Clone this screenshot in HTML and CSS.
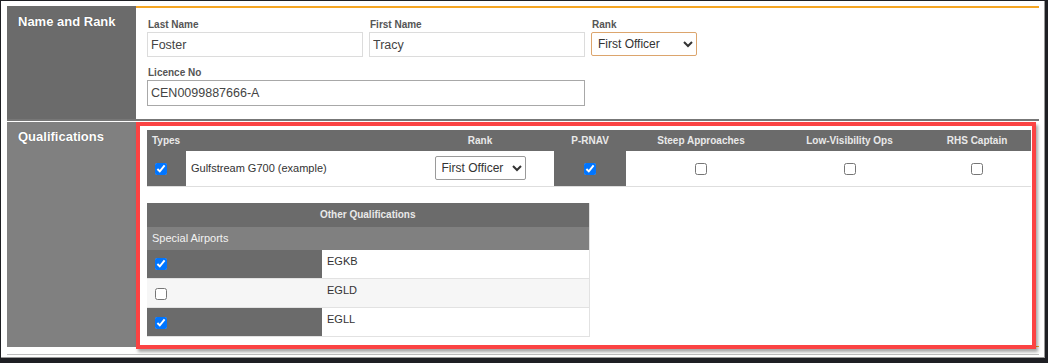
FILE: index.html
```html
<!DOCTYPE html>
<html lang="en">
<head>
    <meta charset="UTF-8">
    <meta name="viewport" content="width=device-width, initial-scale=1.0">
    <title>Crew Member</title>
    <link rel="stylesheet" href="styles.css">
</head>
<body>
    <div class="page">
        <div class="form">
            <div class="section section-name">
                <div class="section-title">Name and Rank</div>
                <div class="section-body">
                    <div class="field-row">
                        <div class="field">
                            <label for="lastName">Last Name</label>
                            <input type="text" id="lastName" class="text-input" value="Foster">
                        </div>
                        <div class="field">
                            <label for="firstName">First Name</label>
                            <input type="text" id="firstName" class="text-input" value="Tracy">
                        </div>
                        <div class="field field-rank">
                            <label for="rank">Rank</label>
                            <select id="rank" class="rank-select rank-select-top">
                                <option>First Officer</option>
                            </select>
                        </div>
                    </div>
                    <div class="field field-licence">
                        <label for="licence">Licence No</label>
                        <input type="text" id="licence" class="text-input licence-input" value="CEN0099887666-A">
                    </div>
                </div>
            </div>

            <div class="section section-quals">
                <div class="section-title">Qualifications</div>
                <div class="section-body">
                    <table class="grid types-table">
                        <colgroup>
                            <col class="col-check">
                            <col class="col-name">
                            <col class="col-rank">
                            <col class="col-prnav">
                            <col class="col-steep">
                            <col class="col-lowvis">
                            <col class="col-rhs">
                        </colgroup>
                        <thead>
                            <tr>
                                <th colspan="2" class="th-left">Types</th>
                                <th>Rank</th>
                                <th>P-RNAV</th>
                                <th>Steep Approaches</th>
                                <th>Low-Visibility Ops</th>
                                <th>RHS Captain</th>
                            </tr>
                        </thead>
                        <tbody>
                            <tr>
                                <td class="cell-check is-on"><input type="checkbox" checked></td>
                                <td class="cell-name">Gulfstream G700 (example)</td>
                                <td class="cell-center">
                                    <select class="rank-select">
                                        <option>First Officer</option>
                                    </select>
                                </td>
                                <td class="cell-center is-on"><input type="checkbox" checked></td>
                                <td class="cell-center"><input type="checkbox"></td>
                                <td class="cell-center"><input type="checkbox"></td>
                                <td class="cell-center"><input type="checkbox"></td>
                            </tr>
                        </tbody>
                    </table>

                    <table class="grid other-table">
                        <colgroup>
                            <col class="col-airport-check">
                            <col class="col-airport-code">
                        </colgroup>
                        <thead>
                            <tr><th colspan="2">Other Qualifications</th></tr>
                            <tr class="subhead"><th colspan="2" class="th-left">Special Airports</th></tr>
                        </thead>
                        <tbody>
                            <tr>
                                <td class="cell-check is-on"><input type="checkbox" checked></td>
                                <td class="cell-code">EGKB</td>
                            </tr>
                            <tr class="row-alt">
                                <td class="cell-check"><input type="checkbox"></td>
                                <td class="cell-code">EGLD</td>
                            </tr>
                            <tr>
                                <td class="cell-check is-on"><input type="checkbox" checked></td>
                                <td class="cell-code">EGLL</td>
                            </tr>
                        </tbody>
                    </table>

                    <!-- review highlight drawn over the section -->
                    <div class="highlight"></div>
                </div>
            </div>
        </div>
    </div>
</body>
</html>
```

FILE: styles.css
```css
* {
    box-sizing: border-box;
}

html, body {
    margin: 0;
    padding: 0;
}

body {
    width: 1048px;
    height: 363px;
    overflow: hidden;
    background: #1e1f23;
    font-family: "Liberation Sans", Arial, sans-serif;
}

.page {
    width: 1044px;
    height: 357px;
    margin: 1px 0 0 1px;
    padding: 5px 0 0 6px;
    background: #fff;
    border-right: 1px solid #9a9a9a;
    border-bottom: 1px solid #9a9a9a;
}

.form {
    width: 1032px;
    height: 349px;
    border-bottom: 1px solid #bdbdbd;
}

.section {
    display: flex;
}

.section-title {
    width: 129px;
    flex: none;
    padding: 8px 11px;
    background: #6b6b6b;
    color: #fff;
    font-size: 13px;
    font-weight: bold;
    line-height: 15px;
    text-shadow: 0 0 1px rgba(0, 0, 0, 0.35);
}

.section-body {
    flex: 1;
}

/* Name and Rank */
.section-name {
    height: 115px;
    border-bottom: 2px solid #777;
    margin-bottom: 1px;
}

.section-name .section-body {
    border-top: 2px solid #f5a623;
    padding: 11px 0 0 11px;
}

.field-row {
    display: flex;
    gap: 6px;
}

.field label {
    display: block;
    margin: 0 0 1px 1px;
    color: #555;
    font-size: 10px;
    font-weight: bold;
    line-height: 12px;
}

.text-input {
    display: block;
    width: 216px;
    height: 25px;
    padding: 0 3px;
    border: 1px solid #dcdcdc;
    border-radius: 0;
    color: #444;
    font-family: "Liberation Sans", Arial, sans-serif;
    font-size: 12.5px;
    outline: none;
}

.field-licence {
    margin-top: 10px;
}

.licence-input {
    width: 438px;
    height: 26px;
    border-color: #a8a8a8;
}

.rank-select {
    width: 91px;
    height: 24px;
    padding: 0 2px;
    border: 1px solid #9a9a9a;
    border-radius: 2px;
    background: #fff;
    color: #333;
    font-family: "Liberation Sans", Arial, sans-serif;
    font-size: 12px;
}

.rank-select-top {
    display: block;
    width: 106px;
    border-color: #dca56d;
}

/* Qualifications */
.section-quals {
    height: 225px;
}

.section-quals .section-title {
    background: #808080;
    padding-top: 7px;
}

.section-quals .section-body {
    position: relative;
    padding: 8px 8px 0 11px;
    border-bottom: 1px solid #f5a623;
}

.grid {
    border-collapse: collapse;
    table-layout: fixed;
    font-family: "Liberation Sans", Arial, sans-serif;
}

.grid th {
    padding: 0 5px;
    background: #6b6b6b;
    color: #e9e9e9;
    font-size: 10px;
    font-weight: bold;
    text-align: center;
    vertical-align: middle;
}

.grid th.th-left {
    text-align: left;
}

.grid td {
    padding: 0;
    border-bottom: 1px solid #dedede;
    color: #333;
    font-size: 11px;
}

.grid td.is-on {
    background: #6b6b6b;
}

.grid input[type="checkbox"] {
    width: 12px;
    height: 12px;
    margin: 0 0 0 4px;
    vertical-align: middle;
}

.cell-check {
    padding-left: 4px !important;
}

.cell-center {
    text-align: center;
}

.cell-center input[type="checkbox"] {
    margin: 0;
}

.types-table {
    width: 884px;
}

.types-table th {
    height: 21px;
}

.types-table td {
    height: 35px;
    vertical-align: middle;
}

.col-check { width: 39px; }
.col-name { width: 220px; }
.col-rank { width: 148px; }
.col-prnav { width: 72px; }
.col-steep { width: 150px; }
.col-lowvis { width: 147px; }
.col-rhs { width: 108px; }

.cell-name {
    padding-left: 5px !important;
}

.other-table {
    width: 442px;
    margin-top: 16px;
    border-right: 1px solid #e2e2e2;
}

.other-table th {
    height: 24px;
}

.other-table .subhead th {
    height: 23px;
    background: #808080;
    color: #f2f2f2;
    font-size: 11px;
    font-weight: normal;
}

.col-airport-check { width: 175px; }
.col-airport-code { width: 267px; }

.other-table td {
    height: 29px;
    border-bottom: 1px solid #e2e2e2;
    vertical-align: middle;
}

.other-table td.cell-code {
    padding: 5px 0 0 5px;
    line-height: 13px;
    vertical-align: top;
}

.other-table .row-alt td {
    background: #f6f6f6;
}

.highlight {
    position: absolute;
    top: 0;
    left: 0;
    width: 900px;
    height: 227px;
    border: 4px solid #fb4343;
    box-shadow: 2px 3px 3px rgba(0, 0, 0, 0.35);
    pointer-events: none;
}
```
